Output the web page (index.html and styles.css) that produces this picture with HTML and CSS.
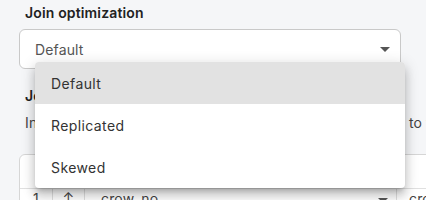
FILE: index.html
```html
<!DOCTYPE html>
<html>
<head>
<meta charset="utf-8">
<link rel="stylesheet" href="styles.css">
</head>
<body>
<div class="page">
  <div class="field">
    <div class="label">Join optimization</div>
    <div class="select">
      <span class="value">Default</span>
      <span class="caret"></span>
    </div>
  </div>
  <h3 class="section">Join keys</h3>
  <p class="desc">Indicate which columns in left dataset must be matched to the right</p>
  <div class="table">
    <div class="row head">
      <div class="cell c1"></div>
      <div class="cell c2"></div>
      <div class="cell c3"></div>
      <div class="cell c4"></div>
    </div>
    <div class="row body">
      <div class="cell c1">1</div>
      <div class="cell c2">↕</div>
      <div class="cell c3"><span>crow_no</span><span class="caret"></span></div>
      <div class="cell c4">crow_no</div>
    </div>
  </div>
</div>
<ul class="menu">
  <li class="item selected">Default</li>
  <li class="item">Replicated</li>
  <li class="item">Skewed</li>
</ul>
</body>
</html>
```
FILE: styles.css
```css
* { box-sizing: border-box; }
html, body { margin: 0; padding: 0; }
body {
  width: 426px;
  height: 200px;
  overflow: hidden;
  background: #f5f6f8;
  font-family: Inter, "Noto Sans", sans-serif;
  font-size: 14px;
  letter-spacing: 0.15px;
  color: #333;
  position: relative;
}
.page {
  padding: 3px 0 0 19px;
}
.label {
  font-weight: 600;
  line-height: 20px;
  padding-left: 6px;
  color: #222;
  margin-bottom: 6px;
}
.select {
  width: 382px;
  height: 40px;
  background: #fff;
  border: 1px solid #c9c9c9;
  border-radius: 6px;
  display: flex;
  align-items: center;
  justify-content: space-between;
  padding: 0 10px 0 15px;
  color: #555;
}
.caret {
  width: 0;
  height: 0;
  border-left: 5px solid transparent;
  border-right: 5px solid transparent;
  border-top: 5px solid #555;
}
.section {
  margin: 17px 0 0 6px;
  font-size: 14px;
  font-weight: 600;
  line-height: 20px;
  color: #222;
}
.desc {
  margin: 7px 0 0 6px;
  line-height: 20px;
  white-space: nowrap;
  letter-spacing: 0.22px;
  color: #444;
}
.table {
  margin-top: 21px;
  width: 430px;
  background: #fff;
  border: 1px solid #d6d6d6;
  border-radius: 6px 0 0 0;
}
.row {
  display: flex;
  height: 34px;
  border-bottom: 1px solid #e0e0e0;
}
.cell {
  display: flex;
  flex-shrink: 0;
  align-items: flex-start;
  line-height: 20px;
  color: #444;
}
.c1 { width: 33px; justify-content: center; }
.c2 { width: 32px; justify-content: center; }
.c3 { width: 312px; justify-content: space-between; padding-left: 16px; padding-right: 8px; }
.c3 .caret { margin-top: 9px; }
.c4 { width: 60px; padding-left: 12px; white-space: nowrap; }
.row.body .c1, .row.body .c2, .row.body .c3 { border-right: 1px solid #e0e0e0; }
.menu {
  position: absolute;
  left: 35px;
  top: 62px;
  width: 370px;
  margin: 0;
  padding: 0;
  list-style: none;
  background: #fff;
  border-radius: 4px;
  overflow: hidden;
  box-shadow: 0 5px 5px -3px rgba(0,0,0,0.2), 0 8px 10px 1px rgba(0,0,0,0.14), 0 3px 14px 2px rgba(0,0,0,0.12);
}
.item {
  height: 42px;
  display: flex;
  align-items: center;
  padding-left: 16px;
  color: #333;
  letter-spacing: 0.4px;
}
.item.selected {
  background: #e2e2e2;
}
```
